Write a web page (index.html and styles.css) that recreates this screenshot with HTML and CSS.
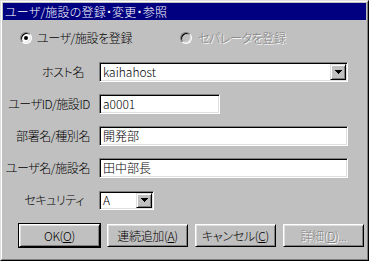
FILE: index.html
```html
<!DOCTYPE html>
<html lang="ja">
<head>
<meta charset="utf-8">
<link rel="stylesheet" href="styles.css">
</head>
<body>
<div class="window">
  <div class="frame">
    <div class="titlebar"><span class="title">ユーザ/施設の登録・変更・参照</span></div>
    <div class="content">
      <div class="radios">
        <div class="radio-item first"><span class="radio checked"></span><span class="rlabel">ユーザ/施設を登録</span></div>
        <div class="radio-item"><span class="radio off"></span><span class="rlabel dis">セパレータを登録</span></div>
      </div>
      <div class="form">
        <div class="label short">ホスト名</div>
        <div class="field combo w-long"><span class="val">kaihahost</span><span class="drop"><svg width="7" height="4" viewBox="0 0 7 4" shape-rendering="crispEdges"><path d="M0 0h7v1H0zM1 1h5v1H1zM2 2h3v1H2zM3 3h1v1H3z" fill="#000"/></svg></span></div>
        <div class="label">ユーザID/施設ID</div>
        <div class="field w-mid"><span class="val">a0001</span></div>
        <div class="label">部署名/種別名</div>
        <div class="field w-long"><span class="val">開発部</span></div>
        <div class="label">ユーザ名/施設名</div>
        <div class="field w-long"><span class="val">田中部長</span></div>
        <div class="label short">セキュリティ</div>
        <div class="field combo w-small sel"><span class="val">A</span><span class="drop"><svg width="7" height="4" viewBox="0 0 7 4" shape-rendering="crispEdges"><path d="M0 0h7v1H0zM1 1h5v1H1zM2 2h3v1H2zM3 3h1v1H3z" fill="#000"/></svg></span></div>
      </div>
      <div class="buttons">
        <div class="btn default">OK(<u>O</u>)</div>
        <div class="btn">連続追加(<u>A</u>)</div>
        <div class="btn">キャンセル(<u>C</u>)</div>
        <div class="btn dis">詳細(<u>D</u>)...</div>
      </div>
    </div>
  </div>
</div>
</body>
</html>
```
FILE: styles.css
```css
html, body {
  margin: 0;
  padding: 0;
  background: #c0c0c0;
}
body {
  font-family: "Noto Sans CJK JP", "Noto Sans", sans-serif;
  font-size: 12px;
  font-weight: 300;
  line-height: 14px;
  font-feature-settings: "palt";
  color: #000;
}
.window {
  width: 369px;
  height: 261px;
  box-sizing: border-box;
  border: 1px solid;
  border-color: #dfdfdf #000 #000 #dfdfdf;
  background: #c0c0c0;
}
.frame {
  height: 100%;
  box-sizing: border-box;
  border: 1px solid;
  border-color: #fff #808080 #808080 #fff;
  padding: 1px;
}
.titlebar {
  height: 17px;
  background: #000080;
  color: #fff;
  display: flex;
  align-items: center;
  padding-left: 2px;
  letter-spacing: 0.2px;
}
.content {
  padding-top: 12px;
}
.radios {
  display: flex;
  align-items: center;
  height: 12px;
  padding-left: 17px;
}
.radio-item {
  display: flex;
  align-items: center;
  gap: 5px;
}
.radio-item.first {
  width: 160px;
}
.rlabel {
  letter-spacing: -0.4px;
}
.radio {
  width: 12px;
  height: 12px;
  box-sizing: border-box;
  border-radius: 50%;
  border: 1px solid;
  border-color: #808080 #fff #fff #808080;
  box-shadow: inset 1px 1px #000, inset -1px -1px #dfdfdf;
  background: #fff;
  display: flex;
  align-items: center;
  justify-content: center;
}
.radio.checked::after {
  content: "";
  width: 4px;
  height: 4px;
  border-radius: 50%;
  background: #000;
}
.radio.off {
  background: #c0c0c0;
}
.dis {
  color: #808080;
  text-shadow: 1px 1px 0 #fff;
}
.rlabel.dis {
  margin-left: 1px;
}
.form {
  margin-top: 18px;
  display: grid;
  grid-template-columns: 96px 1fr;
  grid-auto-rows: 20px;
  row-gap: 12px;
  align-items: center;
}
.label {
  text-align: right;
  padding-right: 9px;
  white-space: nowrap;
  letter-spacing: -0.4px;
}
.label.short {
  padding-right: 15px;
}
.field {
  height: 20px;
  box-sizing: border-box;
  border: 1px solid;
  border-color: #808080 #fff #fff #808080;
  box-shadow: inset 1px 1px #000, inset -1px -1px #dfdfdf;
  background: #fff;
  display: flex;
  align-items: center;
  padding: 2px 2px 2px 3px;
}
.field .val {
  flex: 1;
  white-space: nowrap;
}
.w-long { width: 249px; }
.w-mid { width: 121px; }
.w-small { width: 55px; }
.sel { height: 19px; }
.drop {
  width: 16px;
  height: 16px;
  box-sizing: border-box;
  border: 1px solid;
  border-color: #dfdfdf #000 #000 #dfdfdf;
  box-shadow: inset 1px 1px #fff, inset -1px -1px #808080;
  background: #c0c0c0;
  display: flex;
  align-items: center;
  justify-content: center;
  margin-right: -1px;
}
.sel .drop {
  height: 15px;
}
.drop svg {
  display: block;
}
.buttons {
  margin-top: 14px;
  padding-left: 16px;
  display: flex;
  gap: 7px;
}
.btn {
  width: 81px;
  height: 23px;
  box-sizing: border-box;
  border: 1px solid;
  border-color: #fff #000 #000 #fff;
  box-shadow: inset 1px 1px #dfdfdf, inset -1px -1px #808080;
  background: #c0c0c0;
  display: flex;
  align-items: center;
  justify-content: center;
  white-space: nowrap;
  letter-spacing: -0.3px;
}
.btn.default {
  outline: 1px solid #000;
}
```
